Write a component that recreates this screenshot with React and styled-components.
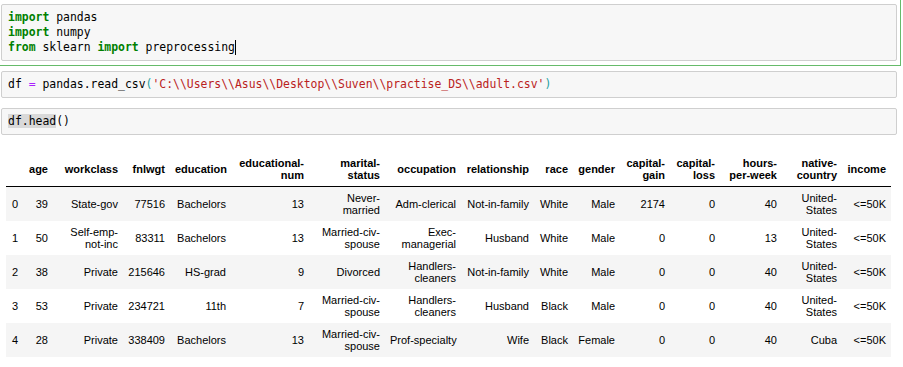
import React from 'react'
import styled, { createGlobalStyle } from 'styled-components'

const GlobalStyle = createGlobalStyle`
    html, body {
        margin: 0;
        padding: 0;
        background: #fff;
        overflow: hidden;
    }
    body {
        font-family: "Liberation Sans", Arial, sans-serif;
    }
`

const csvPath = "'C:\\\\Users\\\\Asus\\\\Desktop\\\\Suven\\\\practise_DS\\\\adult.csv'"

const columns = [
    { key: 'idx', label: '', width: 18 },
    { key: 'age', label: 'age', width: 29 },
    { key: 'workclass', label: 'workclass', width: 70 },
    { key: 'fnlwgt', label: 'fnlwgt', width: 47 },
    { key: 'education', label: 'education', width: 61 },
    { key: 'enum', label: 'educational-\nnum', width: 78 },
    { key: 'marital', label: 'marital-\nstatus', width: 76 },
    { key: 'occupation', label: 'occupation', width: 76 },
    { key: 'relationship', label: 'relationship', width: 73 },
    { key: 'race', label: 'race', width: 39 },
    { key: 'gender', label: 'gender', width: 47 },
    { key: 'gain', label: 'capital-\ngain', width: 50 },
    { key: 'loss', label: 'capital-\nloss', width: 50 },
    { key: 'hours', label: 'hours-\nper-week', width: 62 },
    { key: 'country', label: 'native-\ncountry', width: 60 },
    { key: 'income', label: 'income', width: 49 },
]

const rows = [
    ['0', '39', 'State-gov', '77516', 'Bachelors', '13', 'Never-\nmarried', 'Adm-clerical', 'Not-in-family', 'White', 'Male', '2174', '0', '40', 'United-\nStates', '<=50K'],
    ['1', '50', 'Self-emp-\nnot-inc', '83311', 'Bachelors', '13', 'Married-civ-\nspouse', 'Exec-\nmanagerial', 'Husband', 'White', 'Male', '0', '0', '13', 'United-\nStates', '<=50K'],
    ['2', '38', 'Private', '215646', 'HS-grad', '9', 'Divorced', 'Handlers-\ncleaners', 'Not-in-family', 'White', 'Male', '0', '0', '40', 'United-\nStates', '<=50K'],
    ['3', '53', 'Private', '234721', '11th', '7', 'Married-civ-\nspouse', 'Handlers-\ncleaners', 'Husband', 'Black', 'Male', '0', '0', '40', 'United-\nStates', '<=50K'],
    ['4', '28', 'Private', '338409', 'Bachelors', '13', 'Married-civ-\nspouse', 'Prof-specialty', 'Wife', 'Black', 'Female', '0', '0', '40', 'Cuba', '<=50K'],
]

function App() {
    return (
        <>
            <GlobalStyle />
            <Notebook>
                <Cell selected>
                    <InputArea>
                        <CodeLine><Kw>import</Kw> pandas</CodeLine>
                        <CodeLine><Kw>import</Kw> numpy</CodeLine>
                        <CodeLine><Kw>from</Kw> sklearn <Kw>import</Kw> preprocessing<Cursor /></CodeLine>
                    </InputArea>
                </Cell>
                <Cell>
                    <InputArea>
                        <CodeLine>
                            {'df '}<Op>=</Op>{' pandas.read_csv'}<Bracket>(</Bracket><Str>{csvPath}</Str><Bracket>)</Bracket>
                        </CodeLine>
                    </InputArea>
                </Cell>
                <Cell>
                    <InputArea>
                        <CodeLine><Selected>df.head</Selected>()</CodeLine>
                    </InputArea>
                    <Output>
                        <DataFrame>
                            <colgroup>
                                {columns.map(c => <col key={c.key} style={{ width: c.width }} />)}
                            </colgroup>
                            <thead>
                                <tr>
                                    {columns.map(c => <HeadCell key={c.key}>{c.label}</HeadCell>)}
                                </tr>
                            </thead>
                            <tbody>
                                {rows.map((r, i) => (
                                    <Row key={i}>
                                        {r.map((v, j) => <DataCell key={j} index={j === 0}>{v}</DataCell>)}
                                    </Row>
                                ))}
                            </tbody>
                        </DataFrame>
                    </Output>
                </Cell>
            </Notebook>
        </>
    )
}

export default App

const Notebook = styled.div`
    width: 906px;
    margin: -1px 0 0 -5px;
    display: flex;
    flex-direction: column;
`

const Cell = styled.div`
    border: 1px solid ${props => props.selected ? '#66bb6a' : 'transparent'};
    padding: 4px 3px 4px 5px;
`

const InputArea = styled.div`
    background: #f7f7f7;
    border: 1px solid #cfcfcf;
    border-radius: 2px;
    padding: 5px 6px;
`

const CodeLine = styled.div`
    font-family: "DejaVu Sans Mono", "Liberation Mono", monospace;
    font-size: 11.43px;
    line-height: 15px;
    height: 15px;
    white-space: pre;
    color: #000;
`

const Kw = styled.span`
    color: #008000;
    font-weight: bold;
`

const Op = styled.span`
    color: #aa22ff;
`

const Str = styled.span`
    color: #ba2121;
`

const Bracket = styled.span`
    color: #1f9fa0;
`

const Selected = styled.span`
    background: #d9d9d9;
`

const Cursor = styled.span`
    display: inline-block;
    width: 0;
    height: 15px;
    border-left: 1px solid #000;
    vertical-align: top;
`

const Output = styled.div`
    padding: 17px 0 0 5px;
`

const DataFrame = styled.table`
    table-layout: fixed;
    width: 885px;
    border-collapse: collapse;
    border-spacing: 0;
    font-family: "Liberation Sans", Arial, sans-serif;
    font-size: 11px;
    color: #000;
`

const HeadCell = styled.th`
    text-align: right;
    vertical-align: middle;
    font-weight: bold;
    padding: 5px 5px;
    line-height: 12px;
    white-space: pre;
    border-bottom: 1px solid #000;
`

const Row = styled.tr`
    &:nth-child(odd) {
        background: #f5f5f5;
    }
`

const DataCell = styled.td`
    text-align: ${props => props.index ? 'left' : 'right'};
    vertical-align: middle;
    padding: ${props => props.index ? '5px 0 5px 6px' : '5px 5px'};
    line-height: 12px;
    white-space: pre;
`
